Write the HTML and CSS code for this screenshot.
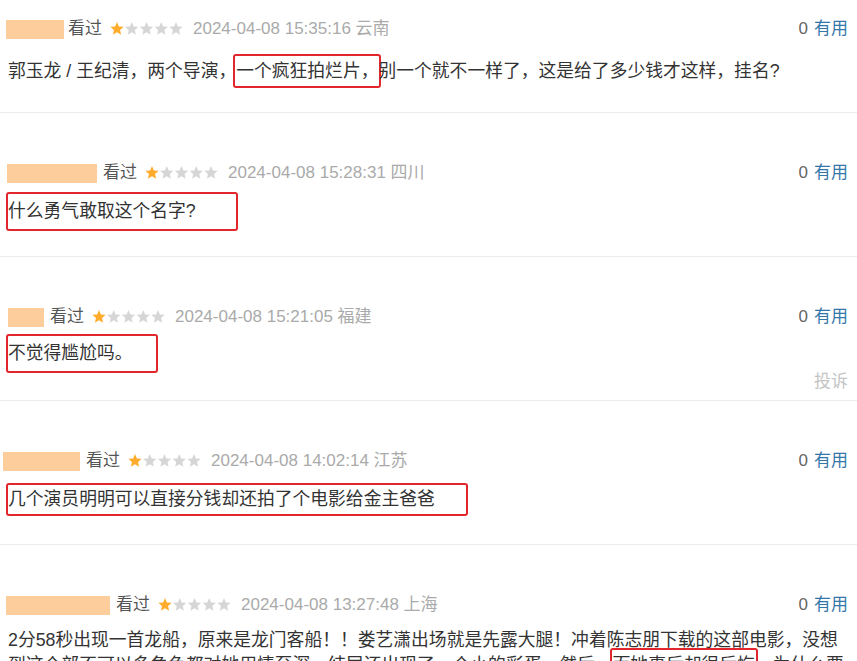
FILE: index.html
```html
<!DOCTYPE html>
<html lang="zh-CN">
<head>
<meta charset="utf-8">
<title>短评</title>
<link rel="stylesheet" href="styles.css">
</head>
<body>
<svg class="defs" width="0" height="0" aria-hidden="true">
  <symbol id="star" viewBox="0 0 14 14">
    <polygon points="7,0 8.88,4.41 13.66,4.84 10.04,7.99 11.11,12.66 7,10.2 2.89,12.66 3.96,7.99 0.34,4.84 5.12,4.41"/>
  </symbol>
</svg>

<div class="list">

  <div class="comment c1">
    <div class="head">
      <div class="meta">
        <span class="name name-1"></span>
        <span class="watched">看过</span>
        <svg class="stars" viewBox="0 0 73 14" width="73" height="14"><use href="#star" x="0" width="14" height="14" class="on"/><use href="#star" x="14.75" width="14" height="14"/><use href="#star" x="29.5" width="14" height="14"/><use href="#star" x="44.25" width="14" height="14"/><use href="#star" x="59" width="14" height="14"/></svg>
        <span class="time">2024-04-08 15:35:16 云南</span>
      </div>
      <div class="votes"><span class="count">0</span><a class="useful">有用</a></div>
    </div>
    <p class="text">郭玉龙 / 王纪清，两个导演，<span class="mark-inline">一个疯狂拍烂片，</span>别一个就不一样了，这是给了多少钱才这样，挂名?</p>
    <div class="foot"><span class="report">投诉</span></div>
  </div>

  <div class="comment c2">
    <div class="head">
      <div class="meta">
        <span class="name name-2"></span>
        <span class="watched">看过</span>
        <svg class="stars" viewBox="0 0 73 14" width="73" height="14"><use href="#star" x="0" width="14" height="14" class="on"/><use href="#star" x="14.75" width="14" height="14"/><use href="#star" x="29.5" width="14" height="14"/><use href="#star" x="44.25" width="14" height="14"/><use href="#star" x="59" width="14" height="14"/></svg>
        <span class="time">2024-04-08 15:28:31 四川</span>
      </div>
      <div class="votes"><span class="count">0</span><a class="useful">有用</a></div>
    </div>
    <p class="text"><span class="mark-block mark-2">什么勇气敢取这个名字?</span></p>
    <div class="foot"><span class="report">投诉</span></div>
  </div>

  <div class="comment c3 hovered">
    <div class="head">
      <div class="meta">
        <span class="name name-3"></span>
        <span class="watched">看过</span>
        <svg class="stars" viewBox="0 0 73 14" width="73" height="14"><use href="#star" x="0" width="14" height="14" class="on"/><use href="#star" x="14.75" width="14" height="14"/><use href="#star" x="29.5" width="14" height="14"/><use href="#star" x="44.25" width="14" height="14"/><use href="#star" x="59" width="14" height="14"/></svg>
        <span class="time">2024-04-08 15:21:05 福建</span>
      </div>
      <div class="votes"><span class="count">0</span><a class="useful">有用</a></div>
    </div>
    <p class="text"><span class="mark-block mark-3">不觉得尴尬吗。</span></p>
    <div class="foot"><span class="report">投诉</span></div>
  </div>

  <div class="comment c4">
    <div class="head">
      <div class="meta">
        <span class="name name-4"></span>
        <span class="watched">看过</span>
        <svg class="stars" viewBox="0 0 73 14" width="73" height="14"><use href="#star" x="0" width="14" height="14" class="on"/><use href="#star" x="14.75" width="14" height="14"/><use href="#star" x="29.5" width="14" height="14"/><use href="#star" x="44.25" width="14" height="14"/><use href="#star" x="59" width="14" height="14"/></svg>
        <span class="time">2024-04-08 14:02:14 江苏</span>
      </div>
      <div class="votes"><span class="count">0</span><a class="useful">有用</a></div>
    </div>
    <p class="text"><span class="mark-block mark-4">几个演员明明可以直接分钱却还拍了个电影给金主爸爸</span></p>
    <div class="foot"><span class="report">投诉</span></div>
  </div>

  <div class="comment c5">
    <div class="head">
      <div class="meta">
        <span class="name name-5"></span>
        <span class="watched">看过</span>
        <svg class="stars" viewBox="0 0 73 14" width="73" height="14"><use href="#star" x="0" width="14" height="14" class="on"/><use href="#star" x="14.75" width="14" height="14"/><use href="#star" x="29.5" width="14" height="14"/><use href="#star" x="44.25" width="14" height="14"/><use href="#star" x="59" width="14" height="14"/></svg>
        <span class="time">2024-04-08 13:27:48 上海</span>
      </div>
      <div class="votes"><span class="count">0</span><a class="useful">有用</a></div>
    </div>
    <p class="text">2分58秒出现一首龙船，原来是龙门客船！！娄艺潇出场就是先露大腿！冲着陈志朋下载的这部电影，没想到这个部不可以多角色都对她用情至深，结尾还出现了一个小的彩蛋，然后，<span class="mark-inline">而她事后却很后悔</span>，为什么要这样拍呢。</p>
    <div class="foot"><span class="report">投诉</span></div>
  </div>

</div>
</body>
</html>
```

FILE: styles.css
```css
html, body {
  margin: 0;
  padding: 0;
  background: #fff;
}

body {
  width: 857px;
  height: 661px;
  overflow: hidden;
  font-family: "Liberation Sans", "Noto Sans CJK SC", sans-serif;
  color: #333;
}

.defs {
  position: absolute;
  width: 0;
  height: 0;
  overflow: hidden;
}

.list {
  margin-top: -31px;
}

.comment {
  padding: 48px 9px 6px 8px;
  border-bottom: 1px solid #ececec;
}

.head {
  display: flex;
  align-items: center;
  justify-content: space-between;
  height: 24px;
  font-size: 17px;
  line-height: 24px;
}

.meta {
  display: flex;
  align-items: center;
}

.name {
  display: block;
  height: 19px;
  margin-left: -2px;
  margin-right: 4px;
  background: #fecd9c;
}

.name-1 { width: 58px; }
.name-2 { width: 90px; margin-left: -1px; margin-right: 6px; }
.name-3 { width: 36px; margin-left: 0; margin-right: 6px; }
.name-4 { width: 77px; margin-left: -5px; margin-right: 6px; }
.name-5 { width: 104px; margin-right: 6px; }

.watched {
  color: #555;
}

.stars {
  display: block;
  margin: 0 10px 0 8px;
  fill: #d6d6d6;
}

.stars .on {
  fill: #ffac2d;
}

.time {
  color: #aaa;
}

.votes {
  display: flex;
  gap: 6px;
}

.count {
  color: #666;
}

.useful {
  color: #3377aa;
  text-decoration: none;
}

.text {
  margin: 14px 0 0;
  font-size: 17.8px;
  line-height: 25px;
}

.c1 .text { margin-top: 18px; }
.c1 .foot { margin-top: -2px; }
.c3 .text { margin-top: 12px; }
.c3 .foot { margin-top: 4px; }
.c5 .text { margin-top: 11px; }

.foot {
  margin-top: 2px;
  height: 24px;
  line-height: 24px;
  font-size: 17px;
  text-align: right;
}

.report {
  color: #c4c4c4;
  visibility: hidden;
}

.hovered .report {
  visibility: visible;
}

.mark-inline {
  border: 2px solid #e2272c;
  border-radius: 3px;
  padding: 5px 1px;
  margin: 0 -3px;
}

.mark-block {
  display: inline-block;
  box-sizing: border-box;
  border: 2px solid #e2272c;
  border-radius: 3px;
  margin: -7px 0 -7px -2px;
  padding: 5px 0 5px 0;
  line-height: 25px;
}

.mark-2 { width: 232px; }
.mark-3 { width: 152px; }
.mark-4 { width: 462px; margin-top: -4px; margin-bottom: -4px; padding-top: 2px; padding-bottom: 2px; }
```
